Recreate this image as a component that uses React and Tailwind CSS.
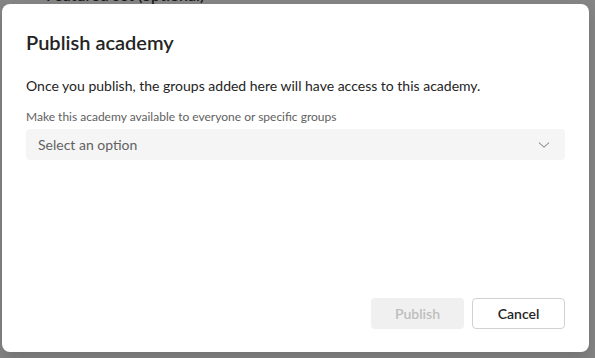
export default function App() {
  return (
    <div
      className="w-[595px] h-[358px] bg-[#858585] flex flex-col overflow-hidden"
      style={{ fontFamily: 'Lato, "Noto Sans", sans-serif' }}
    >
      {/* Page content peeking above the dialog */}
      <div className="h-[4px] overflow-hidden pl-[46px]">
        <div className="-mt-[15px] text-[16px] font-semibold leading-[20px] text-[#1c1c1c]">
          Featured set (optional)
        </div>
      </div>

      {/* Dialog */}
      <div className="ml-[2px] w-[587px] h-[348px] bg-white rounded-[8px] px-6 pt-6 pb-[23px] flex flex-col shadow-[0_8px_16px_rgba(0,0,0,0.14)]">
        <h2 className="text-[20px] leading-[28px] font-semibold text-[#242424]">
          Publish academy
        </h2>
        <p className="mt-[20px] text-[14px] leading-[20px] text-[#242424]">
          Once you publish, the groups added here will have access to this academy.
        </p>

        <label className="mt-[13px] text-[12px] leading-[16px] text-[#616161]">
          Make this academy available to everyone or specific groups
        </label>
        <button className="mt-[4px] h-[31px] w-full rounded-[4px] bg-[#f5f5f5] flex items-center justify-between pl-3 pr-[14px] text-[14px] text-[#616161]">
          <span>Select an option</span>
          <svg width="14" height="14" viewBox="0 0 16 16" fill="none" stroke="#616161" strokeWidth="1" strokeLinecap="round" strokeLinejoin="round">
            <path d="M2.5 5.5 8 10.5l5.5-5" />
          </svg>
        </button>

        <div className="mt-auto flex justify-end gap-2">
          <button className="h-[31px] w-[93px] rounded-[4px] bg-[#f0f0f0] text-[14px] font-semibold text-[#bdbdbd]">
            Publish
          </button>
          <button className="h-[31px] w-[93px] rounded-[4px] bg-white border border-[#d1d1d1] text-[14px] font-semibold text-[#242424]">
            Cancel
          </button>
        </div>
      </div>
    </div>
  )
}
